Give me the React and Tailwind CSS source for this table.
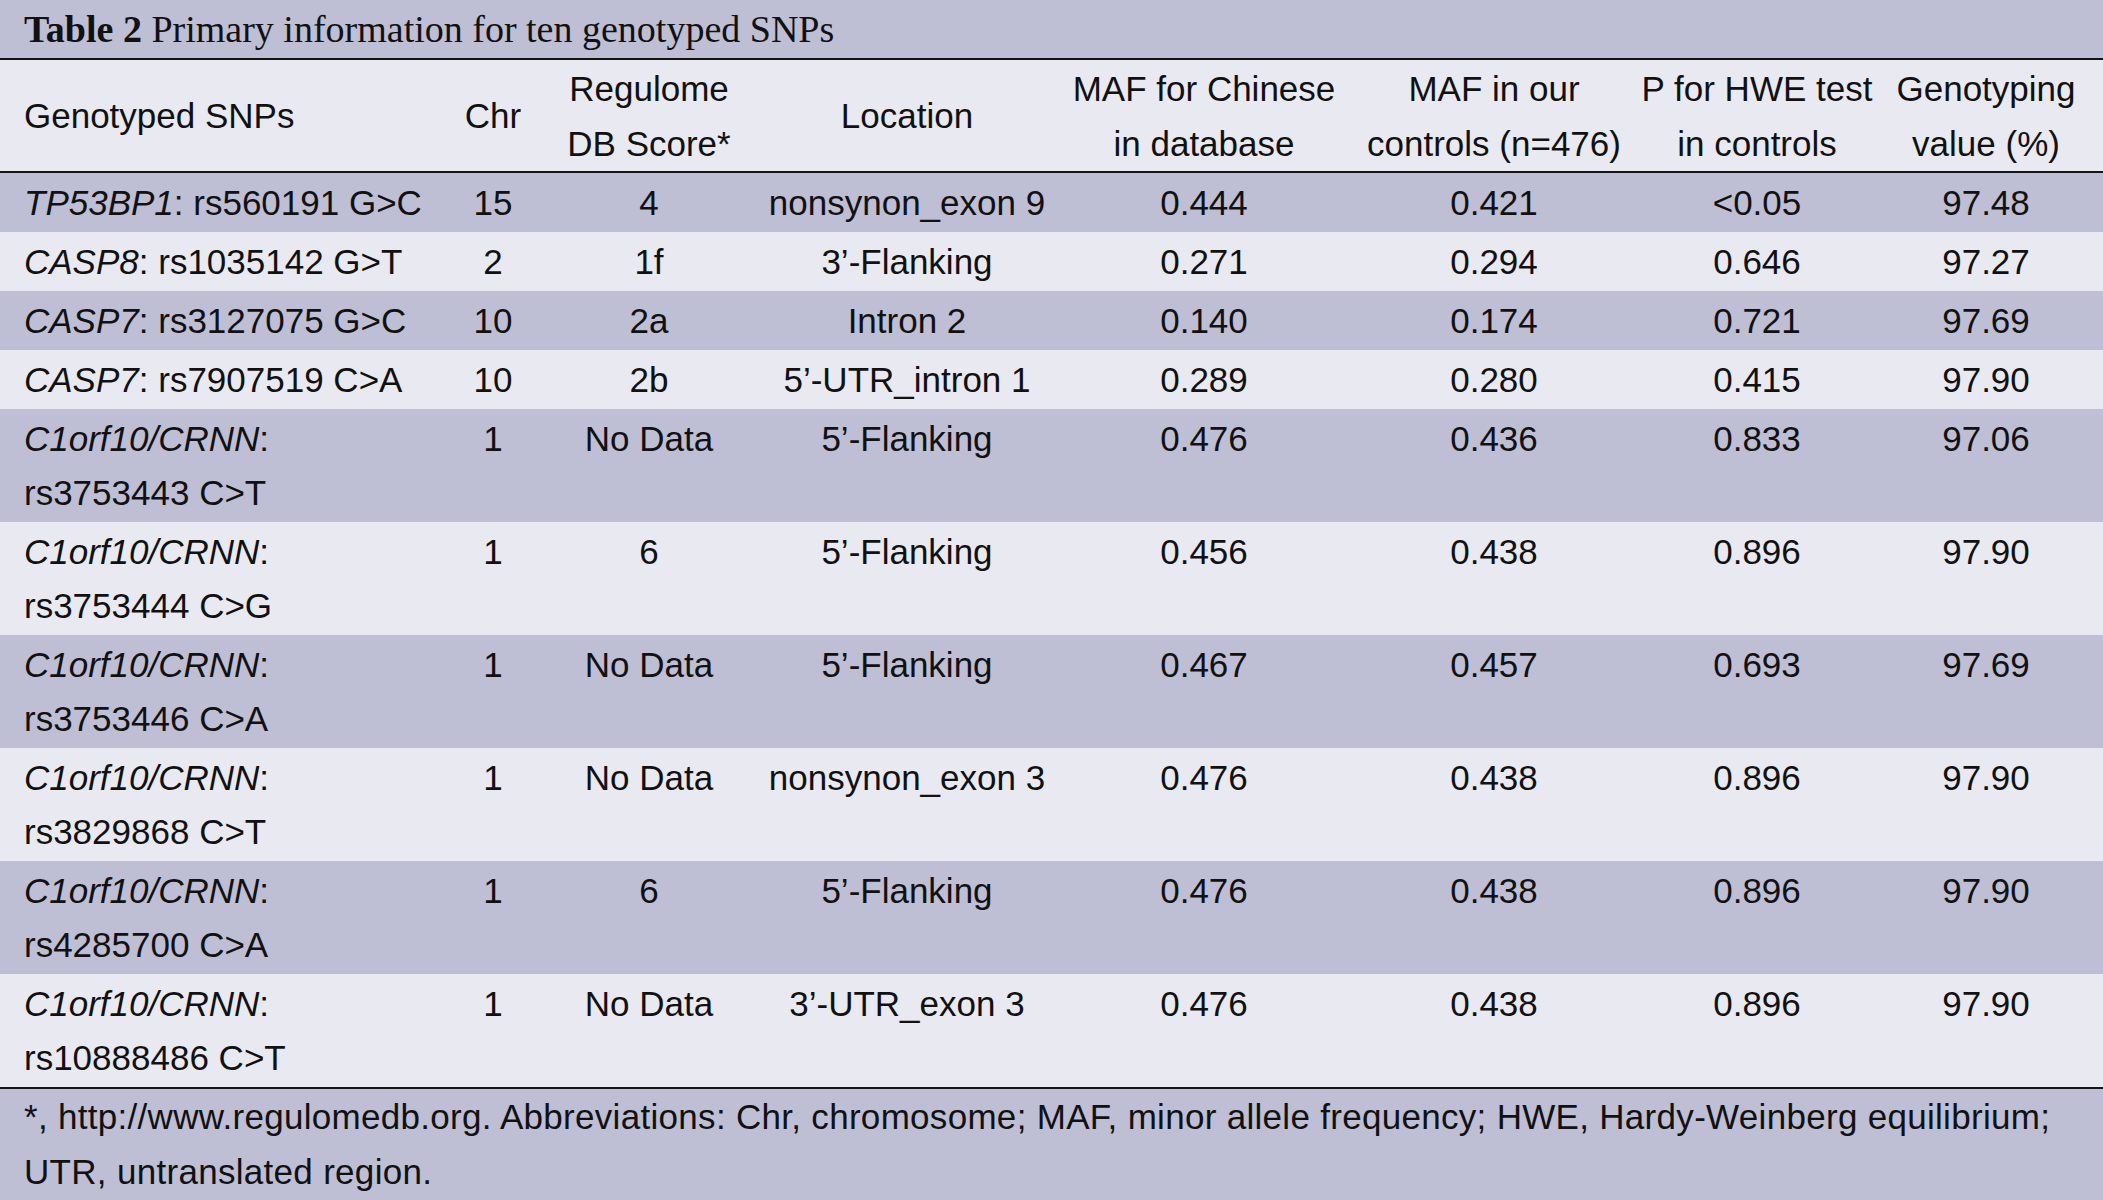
import React from "react";

const rows = [
  { gene: "TP53BP1", snp: "rs560191 G>C", two: false, chr: "15", score: "4", loc: "nonsynon_exon 9", maf1: "0.444", maf2: "0.421", p: "<0.05", g: "97.48" },
  { gene: "CASP8", snp: "rs1035142 G>T", two: false, chr: "2", score: "1f", loc: "3’-Flanking", maf1: "0.271", maf2: "0.294", p: "0.646", g: "97.27" },
  { gene: "CASP7", snp: "rs3127075 G>C", two: false, chr: "10", score: "2a", loc: "Intron 2", maf1: "0.140", maf2: "0.174", p: "0.721", g: "97.69" },
  { gene: "CASP7", snp: "rs7907519 C>A", two: false, chr: "10", score: "2b", loc: "5’-UTR_intron 1", maf1: "0.289", maf2: "0.280", p: "0.415", g: "97.90" },
  { gene: "C1orf10/CRNN", snp: "rs3753443 C>T", two: true, chr: "1", score: "No Data", loc: "5’-Flanking", maf1: "0.476", maf2: "0.436", p: "0.833", g: "97.06" },
  { gene: "C1orf10/CRNN", snp: "rs3753444 C>G", two: true, chr: "1", score: "6", loc: "5’-Flanking", maf1: "0.456", maf2: "0.438", p: "0.896", g: "97.90" },
  { gene: "C1orf10/CRNN", snp: "rs3753446 C>A", two: true, chr: "1", score: "No Data", loc: "5’-Flanking", maf1: "0.467", maf2: "0.457", p: "0.693", g: "97.69" },
  { gene: "C1orf10/CRNN", snp: "rs3829868 C>T", two: true, chr: "1", score: "No Data", loc: "nonsynon_exon 3", maf1: "0.476", maf2: "0.438", p: "0.896", g: "97.90" },
  { gene: "C1orf10/CRNN", snp: "rs4285700 C>A", two: true, chr: "1", score: "6", loc: "5’-Flanking", maf1: "0.476", maf2: "0.438", p: "0.896", g: "97.90" },
  { gene: "C1orf10/CRNN", snp: "rs10888486 C>T", two: true, chr: "1", score: "No Data", loc: "3’-UTR_exon 3", maf1: "0.476", maf2: "0.438", p: "0.896", g: "97.90" },
];

const grid = "grid grid-cols-[445px_96px_216px_300px_294px_286px_240px_226px]";

export default function App() {
  return (
    <div className="w-[2103px] h-[1200px] bg-[#bebed5] text-[#111] font-['Liberation_Sans',Arial,sans-serif] text-[35px] overflow-hidden">
      <div className="h-[60px] border-b-2 border-[#141414] px-[24px] font-['Liberation_Serif',serif] text-[38px] leading-[58px] whitespace-nowrap">
        <span className="font-bold">Table 2</span> Primary information for ten genotyped SNPs
      </div>

      <div className={`${grid} h-[113px] bg-[#e9e9f2] border-b-2 border-[#141414] leading-[55px] whitespace-nowrap`}>
        <div className="flex items-center pl-[24px]">Genotyped SNPs</div>
        <div className="flex items-center justify-center">Chr</div>
        <div className="flex flex-col items-center justify-center text-center">
          <span>Regulome</span>
          <span>DB Score*</span>
        </div>
        <div className="flex items-center justify-center">Location</div>
        <div className="flex flex-col items-center justify-center text-center">
          <span>MAF for Chinese</span>
          <span>in database</span>
        </div>
        <div className="flex flex-col items-center justify-center text-center">
          <span>MAF in our</span>
          <span>controls (n=476)</span>
        </div>
        <div className="flex flex-col items-center justify-center text-center">
          <span>P for HWE test</span>
          <span>in controls</span>
        </div>
        <div className="flex flex-col items-center justify-center text-center pr-[8px]">
          <span>Genotyping</span>
          <span>value (%)</span>
        </div>
      </div>

      {rows.map((r, i) => (
        <div
          key={i}
          className={`${grid} pt-[3px] pb-[2px] leading-[54px] whitespace-nowrap ${i % 2 === 0 ? "bg-[#bebed5]" : "bg-[#e9e9f2]"}`}
        >
          {r.two ? (
            <div className="pl-[24px] flex flex-col">
              <span>
                <i>{r.gene}</i>:
              </span>
              <span>{r.snp}</span>
            </div>
          ) : (
            <div className="pl-[24px]">
              <i>{r.gene}</i>: {r.snp}
            </div>
          )}
          <div className="text-center">{r.chr}</div>
          <div className="text-center">{r.score}</div>
          <div className="text-center">{r.loc}</div>
          <div className="text-center">{r.maf1}</div>
          <div className="text-center">{r.maf2}</div>
          <div className="text-center">{r.p}</div>
          <div className="text-center pr-[8px]">{r.g}</div>
        </div>
      ))}

      <div className="border-t-2 border-[#141414] px-[24px] leading-[55px] whitespace-nowrap tracking-[0.3px]">
        <div>*, http://www.regulomedb.org. Abbreviations: Chr, chromosome; MAF, minor allele frequency; HWE, Hardy-Weinberg equilibrium;</div>
        <div>UTR, untranslated region.</div>
      </div>
    </div>
  );
}
